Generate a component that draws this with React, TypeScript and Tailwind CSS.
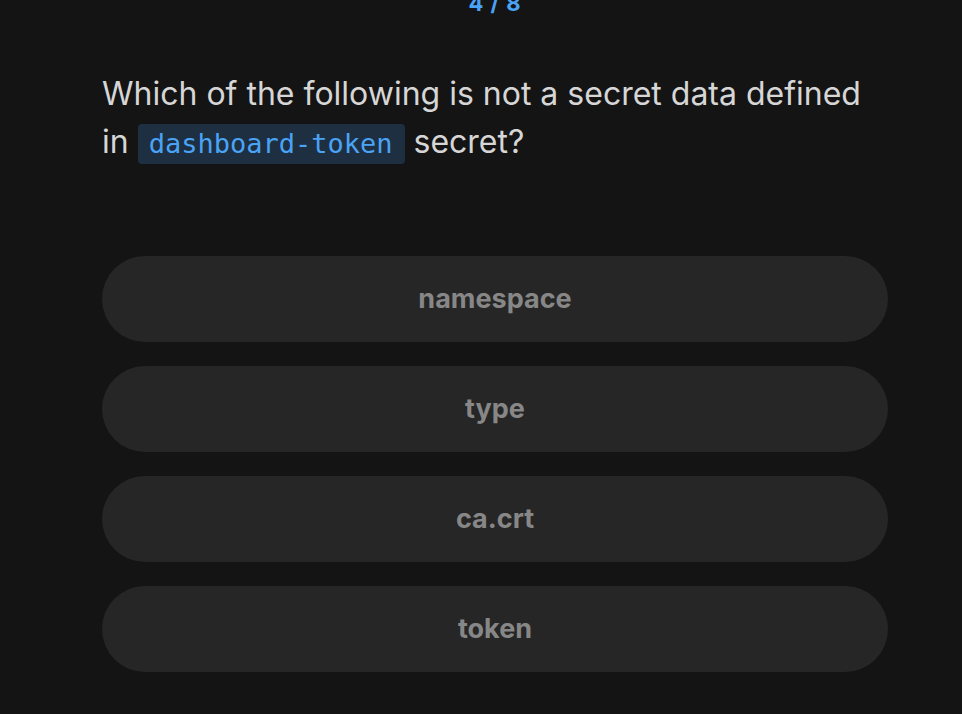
export default function App() {
  const options = ["namespace", "type", "ca.crt", "token"];
  return (
    <div className="w-[962px] h-[714px] bg-[#141414] overflow-hidden" style={{ fontFamily: "Inter, 'Noto Sans', sans-serif" }}>
      <div className="ml-[102px] w-[786px]">
        <div className="-mt-[12px] h-[30px] flex justify-center text-[22px] leading-[30px] font-bold text-[#4ba3f5] tracking-[1px]">
          4 / 8
        </div>
        <div className="mt-[52px] text-[32px] leading-[48px] text-[#d6d6d6]">
          Which of the following is not a secret data defined in{" "}
          <code className="inline-block rounded-[4px] bg-[#1d2f40] pl-[11px] pr-[12px] h-[40px] leading-[40px] align-[0px] text-[27px] text-[#4ba3f5]" style={{ fontFamily: "'DejaVu Sans Mono', monospace" }}>
            dashboard-token
          </code>{" "}
          secret?
        </div>
        <div className="mt-[90px] flex flex-col gap-[24px]">
          {options.map((o) => (
            <div key={o} className="h-[86px] rounded-full bg-[#262626] flex items-center justify-center text-[27px] font-bold text-[#878787]">
              {o}
            </div>
          ))}
        </div>
      </div>
    </div>
  );
}
